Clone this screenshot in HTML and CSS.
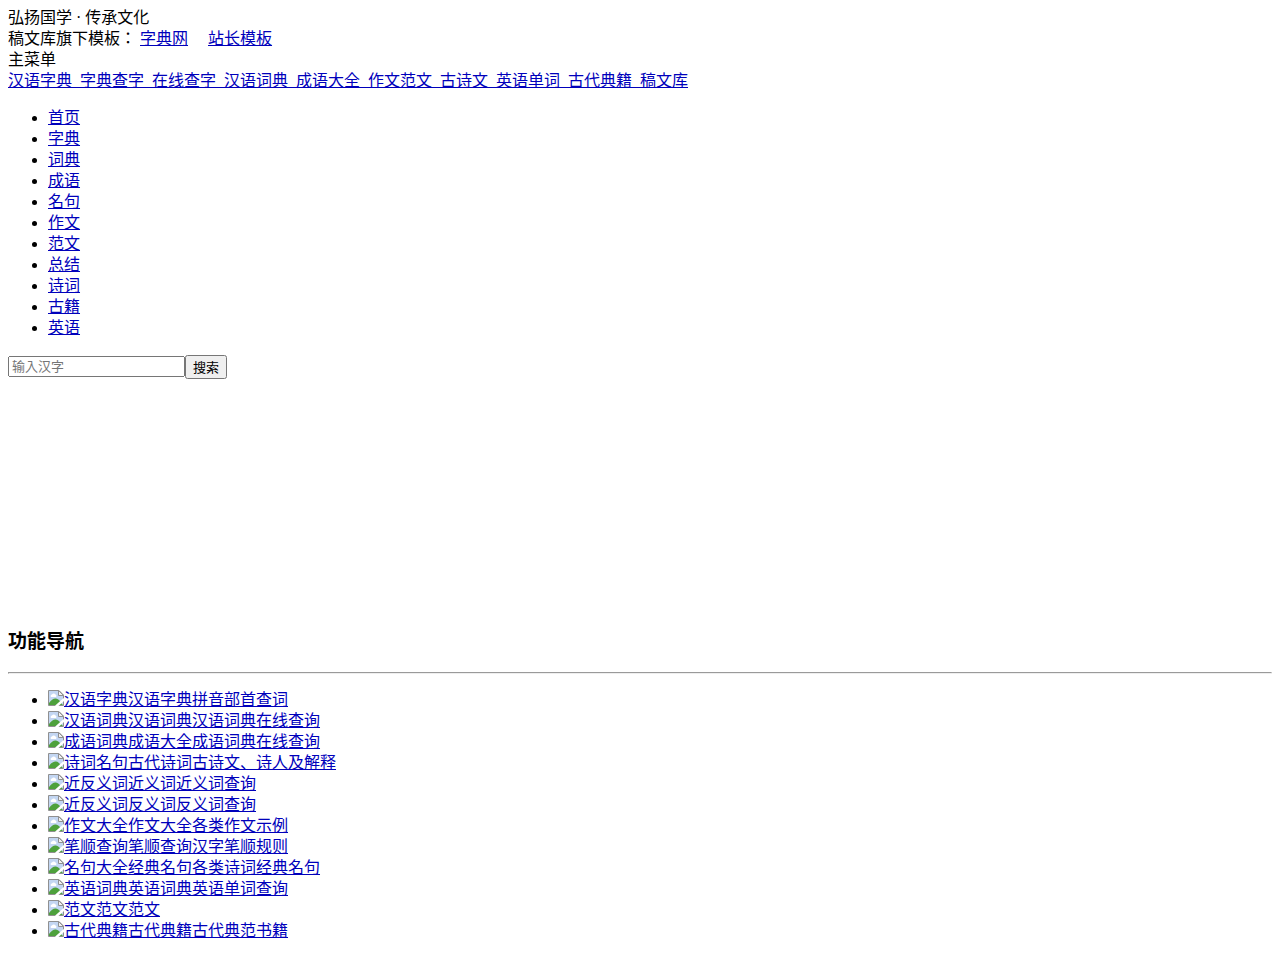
FILE: index.html
```html
<!DOCTYPE html>
<html>
<head>
  <meta charset="UTF-8">
  <title>汉语字典</title>
  <link rel="stylesheet" href="styles.css">
</head>
<body>
  <svg class="defs" aria-hidden="true">
    <symbol id="pic" viewBox="0 0 16 16">
      <path d="M0.5 0.5H11L15.5 5V15.5H0.5z" fill="#c3d6f2" stroke="#909090"/>
      <path d="M3 7a1.5 1.5 0 0 1 1-2.5 2 2 0 0 1 3.5 0A1.5 1.5 0 0 1 8 7z" fill="#fff"/>
      <path d="M1 15V13C3 10 6 8 8 8.5C11 9 12 11 13 13L15 15z" fill="#4ea13c"/>
      <path d="M10.5 0.500V5.500H15.500z" fill="#f2f2f2" stroke="#909090"/>
      <path d="M8 16.500L16.500 9" fill="none" stroke="#fff" stroke-width="2.500"/>
    </symbol>
  </svg>

  <div class="top">
    <div>弘扬国学 · 传承文化</div>
    <div>稿文库旗下模板： <a href="#">字典网</a> <a href="#" class="site">站长模板</a></div>
  </div>
  <div>主菜单</div>
  <a href="#">汉语字典_字典查字_在线查字_汉语词典_成语大全_作文范文_古诗文_英语单词_古代典籍_稿文库</a>

  <ul class="nav">
    <li><a href="#">首页</a></li>
    <li><a href="#">字典</a></li>
    <li><a href="#">词典</a></li>
    <li><a href="#">成语</a></li>
    <li><a href="#">名句</a></li>
    <li><a href="#">作文</a></li>
    <li><a href="#">范文</a></li>
    <li><a href="#">总结</a></li>
    <li><a href="#">诗词</a></li>
    <li><a href="#">古籍</a></li>
    <li><a href="#">英语</a></li>
  </ul>

  <form class="search">
    <input type="text" placeholder="输入汉字" aria-label="输入汉字"><button type="button">搜索</button>
  </form>

  <h3>功能导航</h3>
  <hr>
  <ul class="tools">
    <li><a href="#"><svg class="pic"><use href="#pic"/></svg>汉语字典汉语字典拼音部首查词</a></li>
    <li><a href="#"><svg class="pic"><use href="#pic"/></svg>汉语词典汉语词典汉语词典在线查询</a></li>
    <li><a href="#"><svg class="pic"><use href="#pic"/></svg>成语词典成语大全成语词典在线查询</a></li>
    <li><a href="#"><svg class="pic"><use href="#pic"/></svg>诗词名句古代诗词古诗文、诗人及解释</a></li>
    <li><a href="#"><svg class="pic"><use href="#pic"/></svg>近反义词近义词近义词查询</a></li>
    <li><a href="#"><svg class="pic"><use href="#pic"/></svg>近反义词反义词反义词查询</a></li>
    <li><a href="#"><svg class="pic"><use href="#pic"/></svg>作文大全作文大全各类作文示例</a></li>
    <li><a href="#"><svg class="pic"><use href="#pic"/></svg>笔顺查询笔顺查询汉字笔顺规则</a></li>
    <li><a href="#"><svg class="pic"><use href="#pic"/></svg>名句大全经典名句各类诗词经典名句</a></li>
    <li><a href="#"><svg class="pic"><use href="#pic"/></svg>英语词典英语词典英语单词查询</a></li>
    <li><a href="#"><svg class="pic"><use href="#pic"/></svg>范文范文范文</a></li>
    <li><a href="#"><svg class="pic"><use href="#pic"/></svg>古代典籍古代典籍古代典范书籍</a></li>
  </ul>
</body>
</html>
```
FILE: styles.css
```css
body {
  margin: 7px 8px;
  font-family: "Liberation Serif", "Noto Sans CJK JP", serif;
  font-size: 16px;
  line-height: 21px;
  color: #000;
}
a {
  color: #0000bb;
}
/* zero-size, keeps the shared symbol available */
.defs {
  display: block;
  width: 0;
  height: 0;
}
.site {
  margin-left: 16px;
}
ul {
  margin: 16px 0;
  padding-left: 40px;
}
.search {
  display: flex;
  align-items: flex-start;
  min-height: 256px;
  padding-top: 1px;
}
.search input,
.search button {
  box-sizing: border-box;
  font-family: "Liberation Sans", "Noto Sans CJK JP", sans-serif;
  font-size: 13px;
}
.search input {
  width: 177px;
  height: 21px;
  margin-top: 1px;
}
.search button {
  height: 24px;
  padding: 0 6px 2px;
}
h3 {
  margin: 18px 0 17px;
  font-size: 19px;
  line-height: 26px;
}
hr {
  margin: 8px 0;
}
.tools {
  margin-top: 15px;
}
.pic {
  width: 16px;
  height: 16px;
  vertical-align: -1px;
}
```
